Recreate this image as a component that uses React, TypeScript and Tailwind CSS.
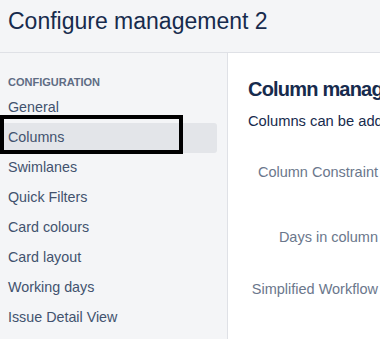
import React from "react";

const items = [
  "General",
  "Columns",
  "Swimlanes",
  "Quick Filters",
  "Card colours",
  "Card layout",
  "Working days",
  "Issue Detail View",
];

export default function App() {
  return (
    <div
      className="relative w-[380px] h-[339px] overflow-hidden bg-[#f4f5f7] text-[#172b4d]"
      style={{ fontFamily: '"Liberation Sans", Arial, sans-serif' }}
    >
      <div className="h-[53px] border-b border-[#dfe1e6] pl-[8px] pt-[5px]">
        <h1 className="text-[23px] leading-[32px] whitespace-nowrap text-[#172b4d]">
          Configure management 2
        </h1>
      </div>
      <div className="flex h-[286px]">
        <nav className="w-[227px] shrink-0 pt-[22px] pr-[10px]">
          <div className="pl-[8px] text-[11px] font-bold leading-[14px] text-[#5e6c84] uppercase">
            Configuration
          </div>
          <ul className="mt-[4px]">
            {items.map((it) => (
              <li
                key={it}
                className={
                  "h-[30px] flex items-center pl-[8px] text-[14.3px] text-[#42526e] rounded-[3px] " +
                  (it === "Columns" ? "bg-[#e3e5e9]" : "")
                }
              >
                {it}
              </li>
            ))}
          </ul>
        </nav>
        <main className="flex-1 bg-white border-l border-[#dfe1e6] pl-[20px] pt-[22px] whitespace-nowrap">
          <h2 className="text-[20px] font-bold leading-[28px] tracking-[-0.8px] text-[#172b4d]">
            Column management
          </h2>
          <p className="mt-[8px] text-[14.7px] leading-[20px] text-[#172b4d]">
            Columns can be added, removed, reordered and renamed.
          </p>
          <div className="mt-[31px] w-[130px] text-right text-[14.5px] text-[#6b778c]">
            <div className="h-[20px] leading-[20px]">Column Constraint</div>
            <div className="h-[20px] leading-[20px] mt-[45px]">Days in column</div>
            <div className="h-[20px] leading-[20px] mt-[32px]">Simplified Workflow</div>
          </div>
        </main>
      </div>
      <div className="absolute left-0 top-[115px] w-[183px] h-[39px] border-4 border-black" />
    </div>
  );
}
